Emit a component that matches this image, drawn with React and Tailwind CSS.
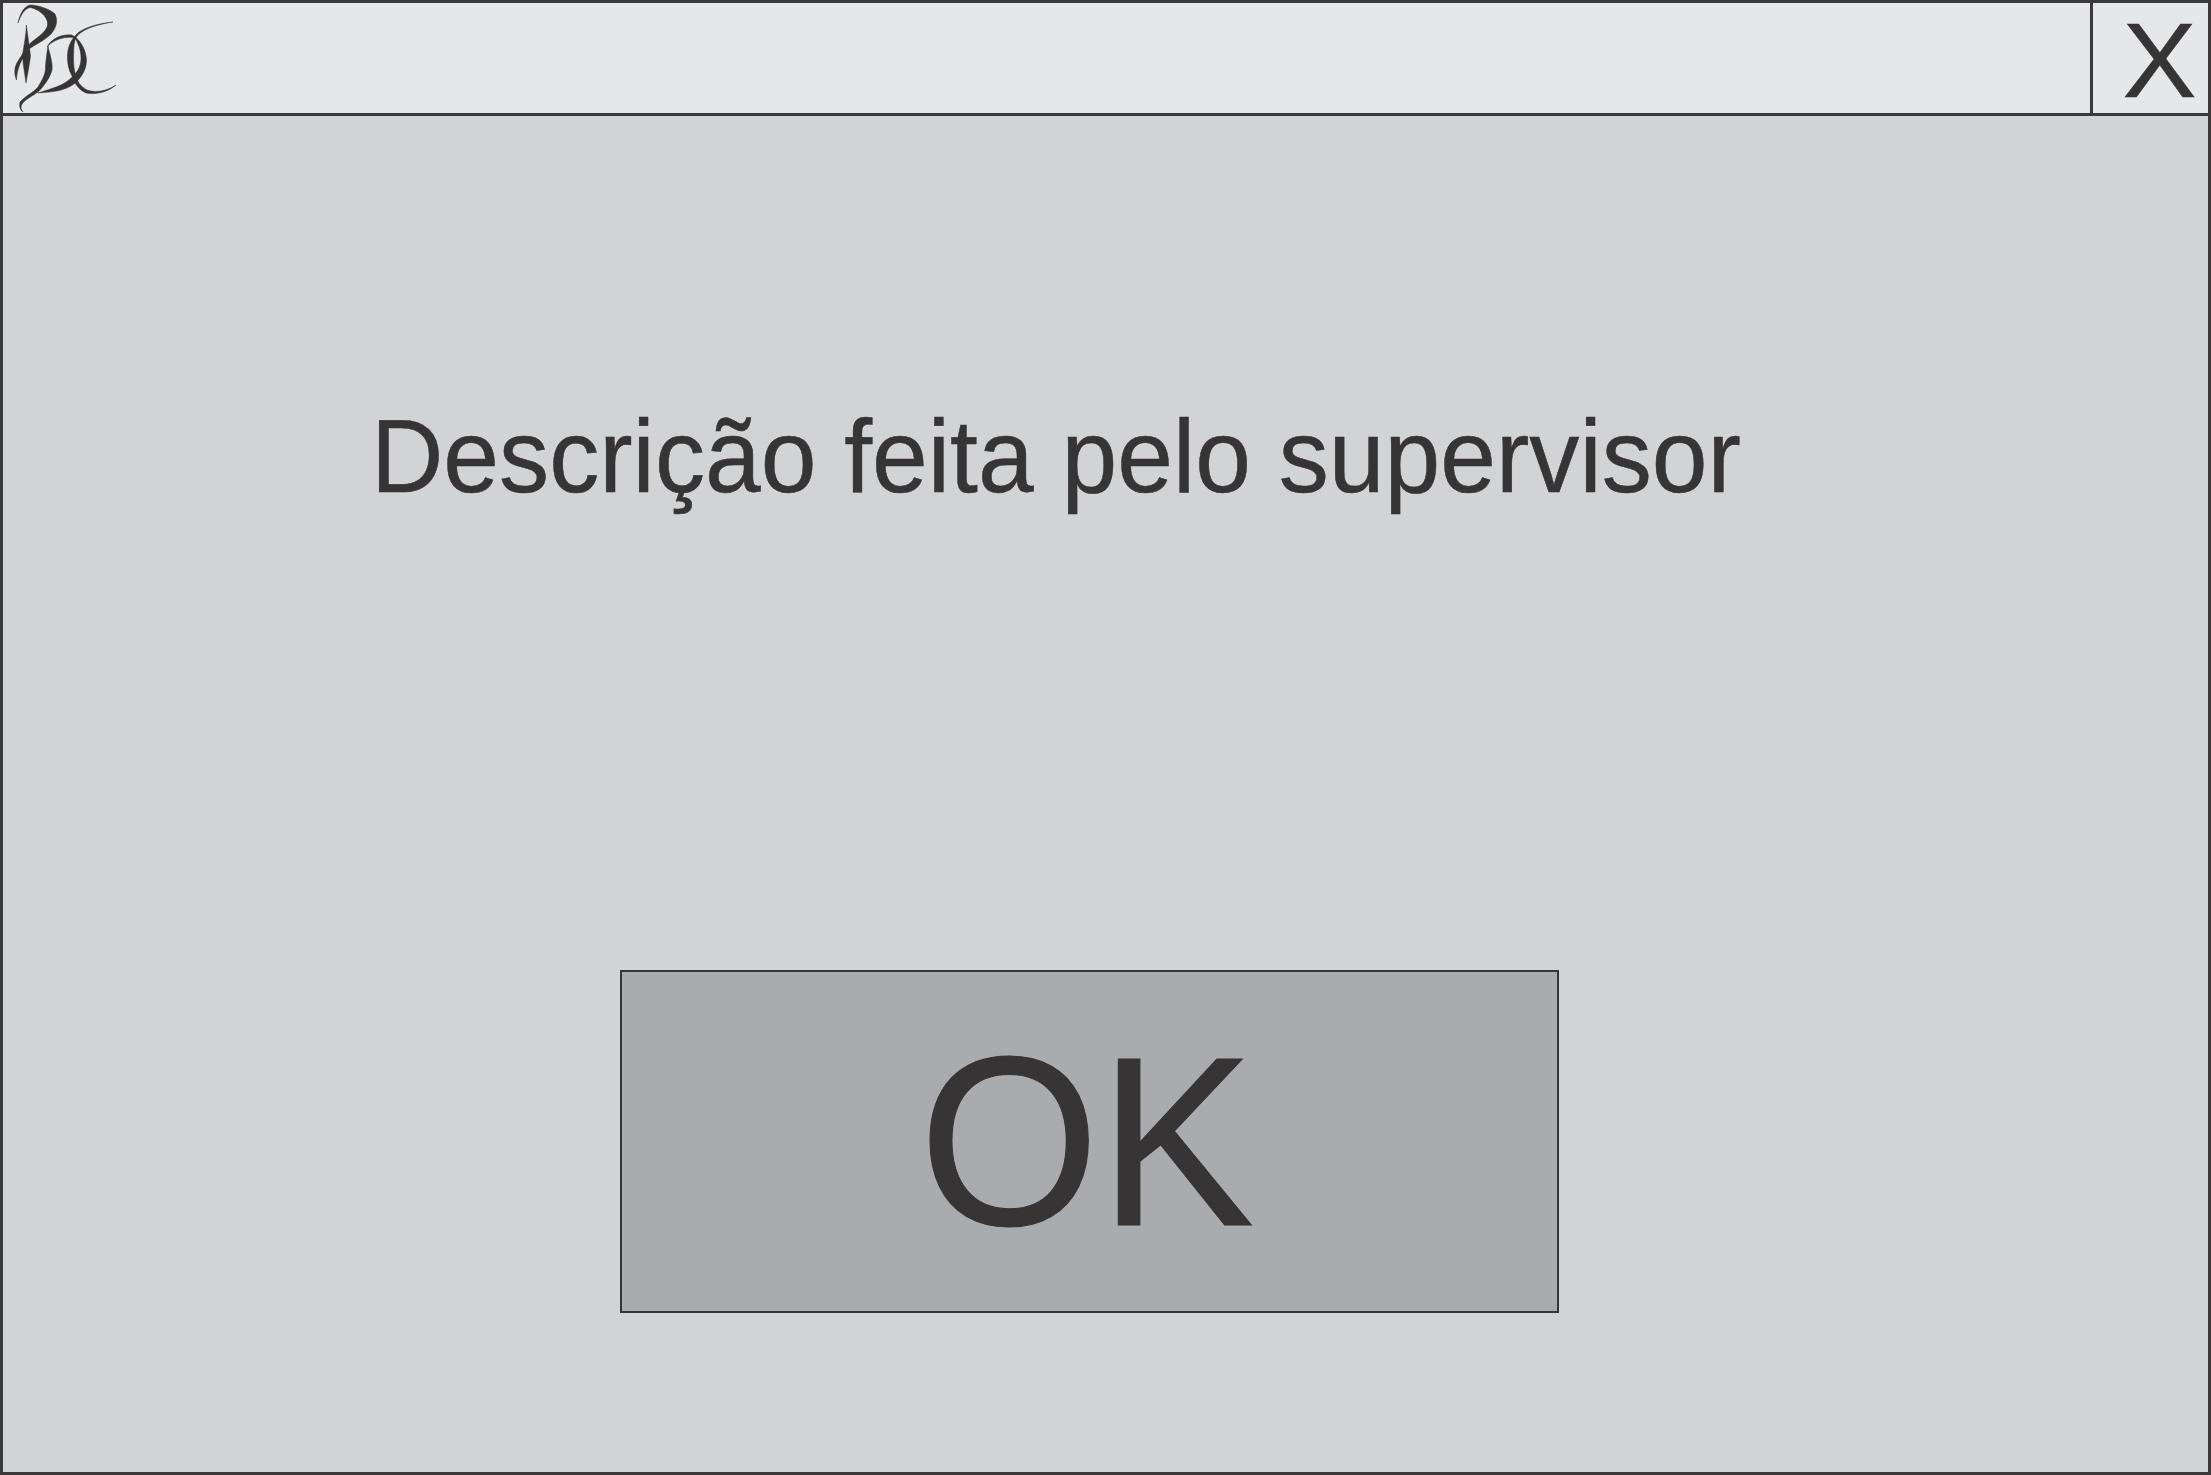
function Logo() {
  return (
    <svg className="w-[125px] h-[110px] shrink-0 overflow-hidden" viewBox="0 0 125 110" fill="#363435" stroke="#363435" strokeWidth="0.5">
      <g transform="translate(-3 -3)">
        {/* P */}
        <path d="M18 23 C20 14 23 7 30 5 C38 5 50 9 55 14 C58 20 57 27 51 34 C44 41 36 44 29 49 C28 47 29 45 30 43.500 C36 38 44 34 47 27 C50 20 42 10 30 7.500 C24 9 21 15 18 23 Z" />
        <path d="M26.500 25 C27 32 29 42 30.500 56 C29.500 65 27.500 74 26 83 C25 74 23 66 22.500 55 C24 45 26 35 26.500 25 Z" />
        <path d="M27 47 C28 49 27 52 25 55 C20 62 17 70 16.500 80 C14 74 14 67 18 61 C21 56 24 52 27 47 Z" />
        {/* D */}
        <path d="M48 46 C49 52 53 62 52 70 C50 78 44 86 38 92 C31 97 24 100 21.500 105 C20.500 108 21 109 23 112 C20 110 19 106 20 102 C25 96 33 93 38 87 C42 80 46 74 45.500 66 C46 60 47 52 48 46 Z" />
        <path d="M47 47 C52 38 62 34 72 35 L76 38 C68 36 55 38 47 47 Z" />
        {/* C loop */}
        <path d="M113 22 C100 24 84 28 77 36 C73 42 74 50 73.500 58 C73.500 68 75 76 79 83 C70 78 67 65 67.500 55 C68 45 72 38 79 32 C88 26 102 23 113 22 Z" />
        <path d="M74 36 C81 41 86 50 86.500 60 C86.500 70 81 78 74 84 C66 90 55 92 38 93 C53 88 62 86 70 79 C77 73 81 67 81 58 C81 50 78 43 74 36 Z" />
        <path d="M72 77 C77 80 81 87 87 90 C96 93 107 91 116 85 C108 92 96 95 86 93 C79 90 75 84 72 77 Z" />
      </g>
    </svg>
  );
}

export default function App() {
  return (
    <div className="w-[2211px] h-[1475px] flex flex-col border-[3px] border-[#3a3839] bg-[#d1d3d4] text-[#363435] font-['Liberation_Sans',Arial,sans-serif]">
      <div className="h-[113px] flex shrink-0 border-b-[3px] border-[#3a3839] bg-[#e6e7e8]">
        <div className="flex-1 flex items-start">
          <Logo />
        </div>
        <button className="w-[118px] border-l-[3px] border-[#3a3839] flex justify-center items-center pl-[18px] pt-[4px] text-[111px] leading-none">
          <span className="scale-y-[0.96] [-webkit-text-stroke:0.5px_#363435]">X</span>
        </button>
      </div>
      <div className="flex-1 flex flex-col">
        <p className="mt-[280px] pl-[368px] text-[100.2px] leading-[120px] whitespace-nowrap scale-y-[1.04] [-webkit-text-stroke:0.5px_#363435]">
          Descrição feita pelo supervisor
        </p>
        <button className="mt-[454px] ml-[617px] w-[939px] h-[343px] border-2 border-[#363435] bg-[#a9abae] flex items-center justify-center text-[232px] leading-none">
          <span className="-ml-[6px] scale-y-[1.04] [-webkit-text-stroke:1px_#363435]">OK</span>
        </button>
      </div>
    </div>
  );
}
